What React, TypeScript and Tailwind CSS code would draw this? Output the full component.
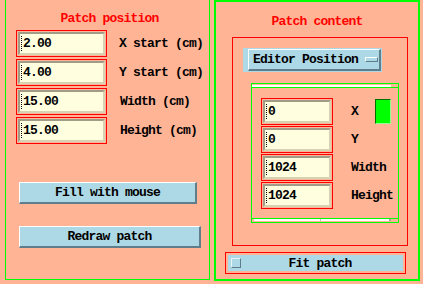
import React from 'react';

const font = "font-['Liberation_Mono',monospace] font-bold text-[13px] tracking-[-0.8px] leading-none";

const Field: React.FC<{ value: string; width: string }> = ({ value, width }) => (
  <div className={`${width} h-[27px] border border-[#ff0000] p-[1px] shrink-0`}>
    <div className="h-full w-full bg-[#ffffe0] border-2 border-t-[#a09c88] border-l-[#a09c88] border-b-[#d8d2b4] border-r-[#d8d2b4] flex items-center pl-[1px]">
      <span className="w-[1px] h-[15px] border-l border-dotted border-black mr-[1px]" />
      <span className={`${font} text-black`}>{value}</span>
    </div>
  </div>
);

const Button: React.FC<{ label: string; width: string }> = ({ label, width }) => (
  <div
    className={`${width} h-[22px] bg-[#add8e6] border-t border-l border-t-white border-l-white border-b-2 border-r-2 border-b-[#5f7d8a] border-r-[#5f7d8a] flex items-center justify-center`}
  >
    <span className={`${font} text-black`}>{label}</span>
  </div>
);

const positionRows = [
  { value: '2.00', label: 'X start (cm)' },
  { value: '4.00', label: 'Y start (cm)' },
  { value: '15.00', label: 'Width (cm)' },
  { value: '15.00', label: 'Height (cm)' },
];

const contentRows = [
  { value: '0', label: 'X' },
  { value: '0', label: 'Y' },
  { value: '1024', label: 'Width' },
  { value: '1024', label: 'Height' },
];

const App: React.FC = () => {
  return (
    <div className="w-[423px] h-[284px] bg-[#ffb496] flex pl-[5px] gap-[4px] overflow-hidden">
      {/* left panel: Patch position */}
      <div className="w-[205px] h-[280px] border-l border-r border-b border-[#00ff00] flex flex-col">
        <div className={`${font} text-[#ff0000] text-center pt-[12px] pl-[4px] h-[30px]`}>Patch position</div>
        <div className="flex flex-col gap-[2px] pl-[10px]">
          {positionRows.map((row) => (
            <div key={row.label} className="flex items-center">
              <Field value={row.value} width="w-[91px]" />
              <span className={`${font} text-black ${row.label.startsWith('W') || row.label.startsWith('H') ? 'ml-[13px]' : 'ml-[12px]'}`}>
                {row.label}
              </span>
            </div>
          ))}
        </div>
        <div className="flex flex-col gap-[22px] pl-[13px] mt-[38px]">
          <Button label="Fill with mouse" width="w-[178px]" />
          <Button label="Redraw patch" width="w-[182px]" />
        </div>
      </div>

      {/* right panel: Patch content */}
      <div className="w-[206px] h-[281px] border-2 border-[#00ff00] flex flex-col">
        <div className={`${font} text-[#ff0000] text-center pt-[13px] h-[35px]`}>Patch content</div>
        <div className="ml-[16px] w-[176px] h-[209px] border border-[#ff0000] flex flex-col pl-[10px] pt-[10px]">
          <div className="w-[139px] h-[24px] bg-[#add8e6] p-[1px] pl-[5px]">
            <div className="h-full w-full border-t border-l border-t-white border-l-white border-b-2 border-r-2 border-b-[#5f7d8a] border-r-[#5f7d8a] flex items-center pl-[4px] gap-[7px]">
              <span className={`${font} text-black`}>Editor Position</span>
              <span className="w-[13px] h-[5px] bg-[#add8e6] border-t border-l border-t-white border-l-white border-b border-r border-b-[#5f7d8a] border-r-[#5f7d8a]" />
            </div>
          </div>
          <div className="ml-[8px] mt-[11px] w-[148px] h-[140px] border border-[#00ff00] flex flex-col">
            <div className="h-[2px] w-[139px] bg-white mt-[1px]" />
            <div className="border-t border-[#00ff00]" />
            <div className="flex flex-col gap-[1px] pl-[9px] pt-[10px]">
              {contentRows.map((row, i) => (
                <div key={row.label} className="flex items-center">
                  <Field value={row.value} width="w-[72px]" />
                  <span className={`${font} text-black ml-[18px]`}>{row.label}</span>
                  {i === 0 && (
                    <span className="ml-[17px] w-[16px] h-[25px] bg-[#00ff00] border-t border-l border-t-[#007000] border-l-[#007000] border-b border-r border-b-[#90ff90] border-r-[#90ff90]" />
                  )}
                </div>
              ))}
            </div>
            <div className="mt-auto border-t border-[#00ff00]" />
            <div className="h-[2px] mx-[2px] mb-[1px] w-[137px] bg-white flex">
              <div className="w-[67px] border-r border-[#c0c0c0]" />
              <div className="flex-1" />
              <div className="w-[2px] bg-[#a0a0a0]" />
            </div>
          </div>
        </div>
        <div className="ml-[9px] mt-[6px] w-[181px] h-[22px] border border-[#ff0000] p-[2px]">
          <div className="h-full w-full bg-[#add8e6] flex items-center pl-[3px]">
            <span className="w-[10px] h-[10px] bg-[#add8e6] border border-t-[#e8f4f8] border-l-[#e8f4f8] border-b-[#5f7d8a] border-r-[#5f7d8a] shrink-0" />
            <span className={`${font} text-black flex-1 text-center pr-[4px]`}>Fit patch</span>
          </div>
        </div>
      </div>
    </div>
  );
};

export default App;
